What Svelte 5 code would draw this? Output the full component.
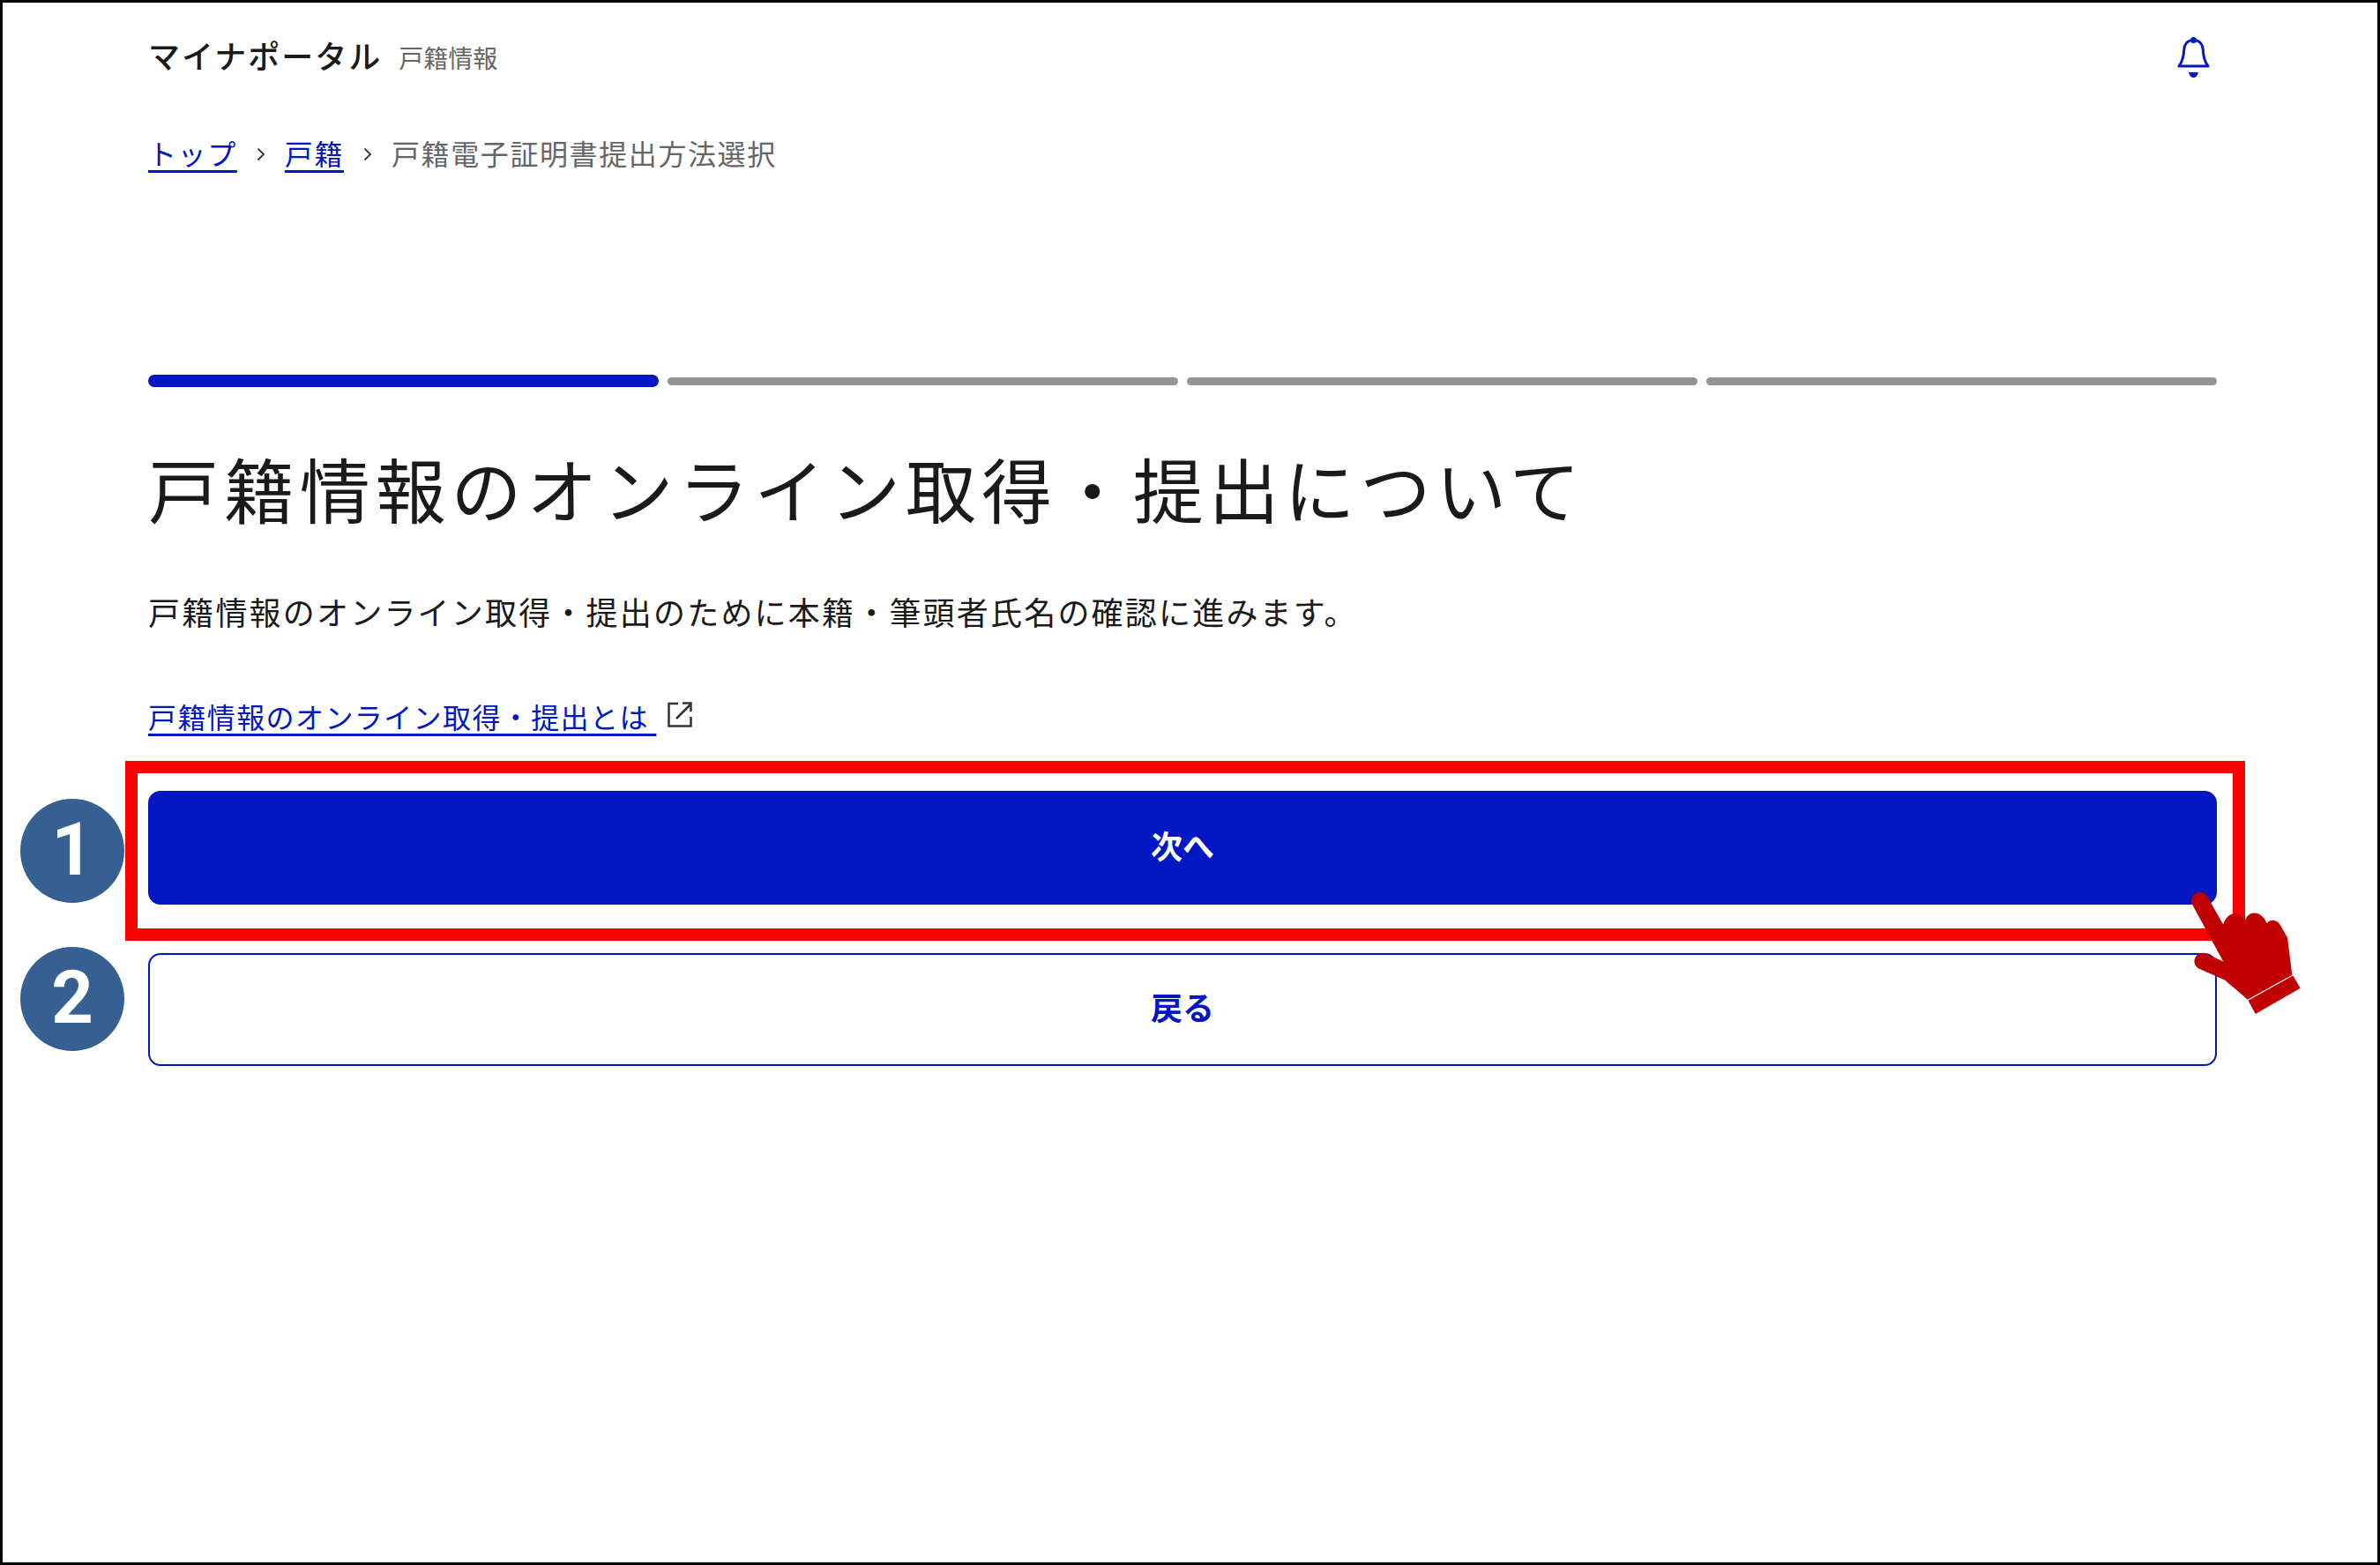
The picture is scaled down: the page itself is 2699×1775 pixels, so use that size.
<script lang="ts">
  const steps = [true, false, false, false];
</script>

<div class="page" lang="ja">
  <div class="content">
    <header class="site-header">
      <div class="brand">
        <span class="brand-name">マイナポータル</span>
        <span class="brand-sub">戸籍情報</span>
      </div>
      <svg class="bell" viewBox="0 0 37 47" aria-hidden="true">
        <path d="M18.5 3.5c-7 0-10.500 5-10.800 11-.3 7-2.200 14-5.700 18.500h33c-3.500-4.500-5.400-11.500-5.700-18.500-.3-6-3.800-11-10.800-11z" fill="none" stroke="currentColor" stroke-width="3" stroke-linejoin="round"/>
        <circle cx="18.500" cy="3.500" r="3.500" fill="currentColor"/>
        <path d="M13 40h11c-.8 4-3 6-5.500 6S13.800 44 13 40z" fill="currentColor"/>
      </svg>
    </header>

    <nav class="breadcrumb">
      <a href="#top">トップ</a>
      <svg class="chevron" viewBox="0 0 12 14" aria-hidden="true"><path d="M2.500 .5L9 7l-6.500 6.500" fill="none" stroke="currentColor" stroke-width="1.800"/></svg>
      <a href="#koseki">戸籍</a>
      <svg class="chevron" viewBox="0 0 12 14" aria-hidden="true"><path d="M2.500 .5L9 7l-6.500 6.500" fill="none" stroke="currentColor" stroke-width="1.800"/></svg>
      <span>戸籍電子証明書提出方法選択</span>
    </nav>

    <div class="progress">
      {#each steps as active}
        <div class="step" class:active></div>
      {/each}
    </div>

    <h1>戸籍情報のオンライン取得・提出について</h1>
    <p class="lead">戸籍情報のオンライン取得・提出のために本籍・筆頭者氏名の確認に進みます。</p>

    <div class="link-row">
      <a href="#about">戸籍情報のオンライン取得・提出とは&nbsp;</a>
      <svg class="external" viewBox="0 0 28 29" aria-hidden="true">
        <path d="M12 2H1.500v25.500H26.500V17" fill="none" stroke="currentColor" stroke-width="2.500"/>
        <path d="M10 19L26 3M17 1.500h9.500V11" fill="none" stroke="currentColor" stroke-width="2.500"/>
      </svg>
    </div>

    <div class="actions">
      <button class="btn primary">次へ</button>
      <button class="btn secondary">戻る</button>
    </div>
  </div>

  <div class="callout-box"></div>
  <div class="marker marker-1">1</div>
  <div class="marker marker-2">2</div>
  <svg class="hand" viewBox="430 480 385 425" aria-hidden="true">
    <path d="M438 524c-6-14 2-36 24-39 14-2 24 6 30 17l53 93c6-22 22-37 37-37 17 0 30 10 38 22 6-16 18-24 31-24 18 0 34 14 43 35 6-8 14-11 24-10 14 2 22 14 28 27l18 32 16 127-152 84-78-67-85-37c-14-7-22-20-17-35 5-14 20-23 35-19l62 28z" fill="#c00000"/>
    <path d="M630 854l153-85 25 43-153 88z" fill="#c00000"/>
  </svg>
</div>

<style>
  :global(body) {
    margin: 0;
    background: #fff;
  }

  .page {
    position: relative;
    box-sizing: border-box;
    width: 2699px;
    height: 1775px;
    border: 3px solid #000;
    background: #fff;
    color: #1a1a1a;
    font-family: "Noto Sans CJK JP", "Noto Sans", sans-serif;
    overflow: hidden;
  }

  .content {
    display: flex;
    flex-direction: column;
    width: 2346px;
    margin-left: 165px;
  }

  .site-header {
    display: flex;
    align-items: center;
    justify-content: space-between;
    height: 124px;
    padding-right: 5px;
  }

  .brand {
    display: flex;
    align-items: center;
    gap: 19px;
    margin-top: -4px;
  }

  .brand-name {
    font-size: 36px;
    font-weight: 500;
    letter-spacing: 2px;
    margin-top: -2px;
  }

  .brand-sub {
    font-size: 28px;
    color: #666;
    margin-top: 4px;
  }

  .bell {
    width: 37px;
    height: 47px;
    margin-right: 3px;
    color: #0017c1;
  }

  .breadcrumb {
    display: flex;
    align-items: center;
    gap: 21px;
    height: 48px;
    margin-top: 22px;
    font-size: 32px;
    letter-spacing: 1.600px;
    color: #666;
  }

  .breadcrumb a,
  .link-row a {
    color: #0017c1;
    text-decoration: underline;
    text-decoration-thickness: 3px;
    text-underline-offset: 6px;
  }

  .chevron {
    width: 12px;
    height: 14px;
    margin-top: 4px;
    color: #333;
  }

  .progress {
    display: flex;
    align-items: center;
    gap: 10px;
    margin-top: 228px;
  }

  .step {
    flex: 1;
    height: 9px;
    border-radius: 5px;
    background: #949494;
  }

  .step.active {
    height: 14px;
    border-radius: 7px;
    background: #0017c1;
  }

  h1 {
    margin: 53px 0 0;
    font-size: 80px;
    font-weight: 400;
    line-height: 120px;
    letter-spacing: 5.900px;
  }

  .lead {
    margin: 51px 0 0;
    font-size: 36px;
    line-height: 60px;
    letter-spacing: 2.200px;
  }

  .link-row {
    display: flex;
    align-items: center;
    gap: 13px;
    height: 50px;
    margin-top: 64px;
    font-size: 32px;
    letter-spacing: 1.400px;
  }

  .external {
    width: 28px;
    height: 29px;
    margin-top: -4px;
    color: #333;
  }

  .actions {
    display: flex;
    flex-direction: column;
    gap: 55px;
    margin-top: 60px;
  }

  .btn {
    height: 129px;
    padding: 0 0 8px;
    border-radius: 14px;
    font-family: inherit;
    font-size: 36px;
    font-weight: 700;
  }

  .primary {
    border: 2px solid #0017c1;
    background: #0017c1;
    color: #fff;
  }

  .secondary {
    height: 128px;
    border: 2px solid #0017c1;
    background: #fff;
    color: #0017c1;
  }

  .callout-box {
    position: absolute;
    left: 139px;
    top: 860px;
    box-sizing: border-box;
    width: 2404px;
    height: 204px;
    border: 14px solid #f00;
  }

  .marker {
    position: absolute;
    left: 20px;
    display: flex;
    align-items: center;
    justify-content: center;
    box-sizing: border-box;
    width: 118px;
    height: 118px;
    padding-bottom: 3px;
    border-radius: 50%;
    background: #376092;
    color: #fff;
    font-family: Roboto, "Liberation Sans", sans-serif;
    font-size: 83px;
    font-weight: 700;
  }

  .marker-1 {
    top: 903px;
  }

  .marker-2 {
    top: 1071px;
  }

  .hand {
    position: absolute;
    left: 2480px;
    top: 1007px;
    width: 128px;
    height: 142px;
  }
</style>
